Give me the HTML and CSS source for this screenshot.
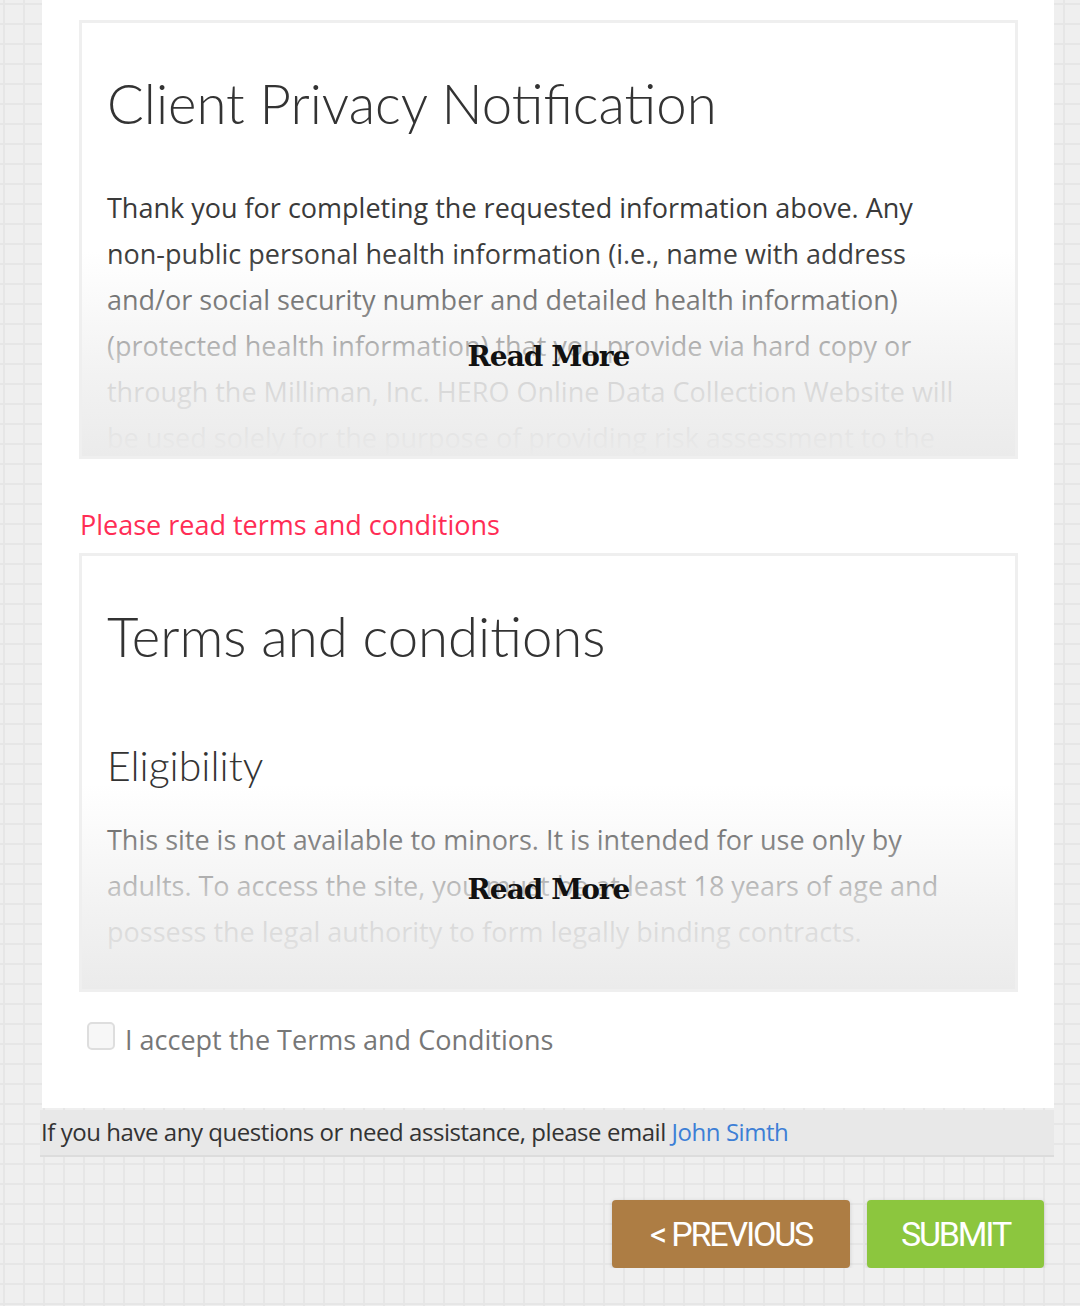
FILE: index.html
```html
<!DOCTYPE html>
<html lang="en">
<head>
    <meta charset="UTF-8">
    <meta name="viewport" content="width=device-width, initial-scale=1.0">
    <title>Client Privacy Notification</title>
    <link rel="stylesheet" href="styles.css">
</head>
<body>
    <div class="panel">
        <div class="terms-box">
            <h2 class="box-title">Client Privacy Notification</h2>
            <p class="box-text">Thank you for completing the requested information above. Any <span class="nowrap">non-public</span> personal health information (i.e., name with address and/or social security number and detailed health information) (protected health information) that you provide via hard copy or through the Milliman, Inc. HERO Online Data Collection Website will be used solely for the purpose of providing risk assessment to the organization.</p>
            <div class="read-more"><span>Read More</span></div>
        </div>

        <div class="warning">Please read terms and conditions</div>

        <div class="terms-box">
            <h2 class="box-title">Terms and conditions</h2>
            <h3 class="box-subtitle">Eligibility</h3>
            <p class="box-text">This site is not available to minors. It is intended for use only by adults. To access the site, you must be at least 18 years of age and possess the legal authority to form legally binding contracts.</p>
            <div class="read-more"><span>Read More</span></div>
        </div>

        <label class="accept">
            <input type="checkbox">
            <span>I accept the Terms and Conditions</span>
        </label>
    </div>

    <div class="help">If you have any questions or need assistance, please email <a href="#">John Simth</a></div>

    <div class="actions">
        <button class="btn btn-prev">&lt; PREVIOUS</button>
        <button class="btn btn-submit">SUBMIT</button>
    </div>
</body>
</html>
```

FILE: styles.css
```css
body {
    margin: 0;
    background-color: #efefef;
    background-image:
        linear-gradient(to right, #e6e6e6 2px, transparent 2px),
        linear-gradient(to bottom, #e6e6e6 2px, transparent 2px);
    background-size: 20px 20px;
    background-position: 3px 3px;
    font-family: "Open Sans", Lato, sans-serif;
    color: #444;
}
.panel {
    margin-left: 42px;
    width: 1012px;
    background: #fff;
    padding: 20px 36px 50px 37px;
    box-sizing: border-box;
}
.terms-box {
    position: relative;
    height: 439px;
    border: 3px solid #efefef;
    padding: 0 25px;
    overflow: hidden;
    box-sizing: border-box;
}
.box-title {
    margin: 40px 0 0;
    font-family: Lato, sans-serif;
    font-size: 54.5px;
    font-weight: 300;
    line-height: 80px;
    color: #333;
}
.box-subtitle {
    margin: 60px 0 0;
    font-family: Lato, sans-serif;
    font-size: 41px;
    font-weight: 300;
    line-height: 60px;
    color: #333;
}
.box-text {
    margin: 21px 0 0;
    font-size: 27px;
    line-height: 46px;
    color: #3a3a3a;
}
.box-title + .box-text {
    margin-top: 42px;
}
.nowrap {
    white-space: nowrap;
}
.read-more {
    position: absolute;
    left: 0;
    right: 0;
    bottom: 0;
    height: 205px;
    background: linear-gradient(to bottom, rgba(255,255,255,0) 0%, rgba(240,240,240,0.85) 60%, #ebebeb 100%);
    text-align: center;
}
.read-more span {
    display: inline-block;
    margin-top: 89px;
    font-family: "DejaVu Serif", serif;
    font-weight: bold;
    font-size: 28px;
    letter-spacing: -1px;
    color: #111;
}
.warning {
    margin: 48px 0 10px 1px;
    font-size: 27px;
    line-height: 36px;
    color: #ff2d55;
}
.accept {
    display: flex;
    align-items: center;
    gap: 10px;
    margin: 29px 0 0 8px;
    font-size: 27px;
    color: #777;
}
.accept input {
    appearance: none;
    width: 28px;
    height: 28px;
    margin: -8px 0 0;
    border: 2px solid #dedede;
    border-radius: 5px;
    background: #f7f7f7;
}
.help {
    margin: 2px 0 0 40px;
    width: 1014px;
    box-sizing: border-box;
    background: #e8e8e8;
    border-bottom: 2px solid #dcdcdc;
    padding: 7px 0 8px 1px;
    font-size: 24px;
    line-height: 30px;
    color: #333;
    letter-spacing: -0.45px;
}
.help a {
    color: #3d7fd6;
    text-decoration: none;
}
.actions {
    display: flex;
    justify-content: flex-end;
    gap: 17px;
    padding: 43px 36px 0 0;
}
.btn {
    height: 68px;
    border: none;
    border-radius: 4px;
    color: #fff;
    font-family: Roboto, sans-serif;
    font-size: 34px;
    letter-spacing: -2.2px;
    box-shadow: 0 1px 4px rgba(0,0,0,0.15);
    cursor: pointer;
}
.btn-prev {
    width: 238px;
    background: #ad7d44;
}
.btn-submit {
    width: 177px;
    background: #8cc63e;
}
```
